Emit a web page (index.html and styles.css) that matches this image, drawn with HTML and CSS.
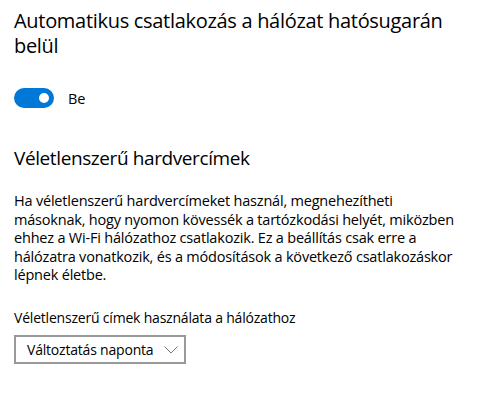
FILE: index.html
```html
<!DOCTYPE html>
<html lang="hu">
<head>
  <meta charset="UTF-8">
  <title>Wi-Fi beállítások</title>
  <link rel="stylesheet" href="styles.css">
</head>
<body>
  <div class="page">
    <h2 class="title">Automatikus csatlakozás a hálózat hatósugarán<br>belül</h2>
    <div class="toggle-row">
      <span class="toggle on"><span class="knob"></span></span>
      <span class="toggle-label">Be</span>
    </div>

    <h2 class="heading">Véletlenszerű hardvercímek</h2>
    <p class="desc">
      Ha véletlenszerű hardvercímeket használ, megnehezítheti<br>
      másoknak, hogy nyomon kövessék a tartózkodási helyét, miközben<br>
      ehhez a Wi-Fi hálózathoz csatlakozik. Ez a beállítás csak erre a<br>
      hálózatra vonatkozik, és a módosítások a következő csatlakozáskor<br>
      lépnek életbe.
    </p>

    <p class="field-label">Véletlenszerű címek használata a hálózathoz</p>
    <div class="select">
      <span>Változtatás naponta</span>
      <svg class="chevron" width="14" height="8" viewBox="0 0 14 8">
        <path d="M0.5 0.5 L7 7 L13.5 0.5" fill="none" stroke="#777" stroke-width="1"/>
      </svg>
    </div>
  </div>
</body>
</html>
```

FILE: styles.css
```css
body { margin: 0; background: #fff; color: #000; font-family: "Open Sans", "Noto Sans", sans-serif; }
.page { padding: 8px 14px 0; }
h2 { margin: 0; font-weight: normal; line-height: 25px; }
.title { font-size: 20px; letter-spacing: -0.3px; }
.toggle-row { display: flex; align-items: center; margin-top: 30px; height: 20px; }
.toggle { width: 40px; height: 20px; border-radius: 10px; background: #0078d7; position: relative; }
.toggle .knob { position: absolute; width: 10px; height: 10px; border-radius: 50%; background: #fff; top: 5px; right: 5px; }
.toggle-label { margin-left: 14px; font-size: 14.5px; }
.heading { margin-top: 38px; font-size: 19px; letter-spacing: -0.4px; }
.desc { margin: 21px 0 0; font-size: 14.5px; line-height: 18.5px; letter-spacing: -0.2px; }
.field-label { margin: 24px 0 0; font-size: 14px; line-height: 18.5px; letter-spacing: -0.2px; }
.select { margin-top: 8px; height: 25px; width: 151px; border: 2px solid #999; display: flex; align-items: center; justify-content: space-between; padding: 0 6px 0 11px; font-size: 14px; letter-spacing: -0.2px; }
.chevron { display: block; }
```
